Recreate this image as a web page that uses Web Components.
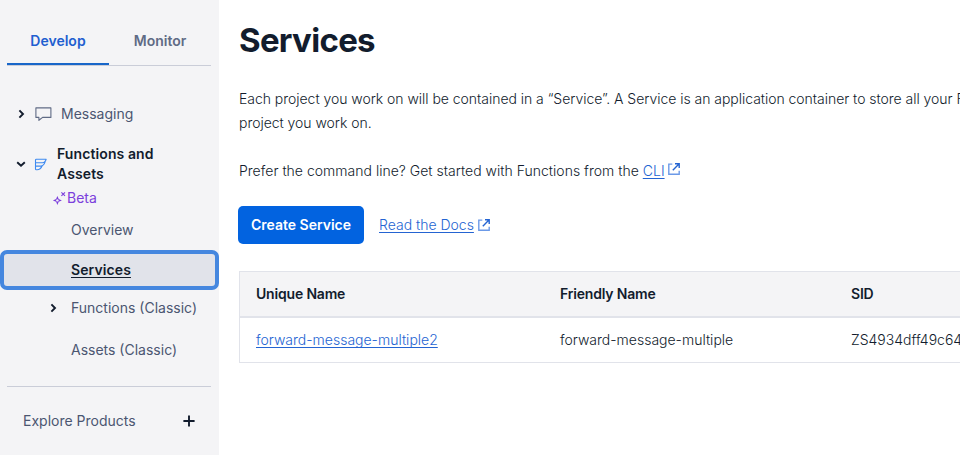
<!DOCTYPE html>
<html lang="en">
<head>
<meta charset="utf-8">
<title>Services</title>
<style>
html,body{margin:0;height:100%;overflow:hidden;background:#fff}
body{font-family:Inter,"Liberation Sans",sans-serif;font-size:14px;line-height:20px;color:#121c2d}
</style>
</head>
<body>
<app-shell>
  <side-nav slot="side">
    <nav-tabs></nav-tabs>
    <nav-item style="--top:28px;--gap:9px"><ui-icon slot="lead" name="right"></ui-icon><ui-icon slot="lead" name="chat"></ui-icon>Messaging</nav-item>
    <nav-item strong style="--top:10px;--gap:10px"><ui-icon slot="lead" name="down"></ui-icon><ui-icon slot="lead" name="functions"></ui-icon><span>Functions and<br>Assets</span></nav-item>
    <beta-tag>Beta</beta-tag>
    <nav-item sub>Overview</nav-item>
    <nav-item sub active>Services</nav-item>
    <nav-item sub style="--h:36px"><ui-icon slot="lead" name="right"></ui-icon>Functions (Classic)</nav-item>
    <nav-item sub style="--h:48px">Assets (Classic)</nav-item>
    <nav-explore>Explore Products</nav-explore>
  </side-nav>
  <service-page slot="main"></service-page>
</app-shell>
<script>
const define = (name, html, setup) => customElements.define(name, class extends HTMLElement {
  constructor() {
    super();
    this.attachShadow({mode: 'open'}).innerHTML = html;
  }
  connectedCallback() { if (setup) setup(this); }
});

const icons = {
  right: [8, 10, '<path d="M2.4 1.4 6 5 2.4 8.6" stroke="#121c2d" stroke-width="1.9"/>'],
  down: [10, 8, '<path d="M1.2 2.2 5 5.8 8.8 2.2" stroke="#121c2d" stroke-width="1.9"/>'],
  chat: [17, 14, '<path d="M.9.9H15.9V10.4H7.6L3.9 13.3V10.4H.9Z" stroke="#606b85" stroke-width="1.1" stroke-linejoin="round"/>'],
  functions: [13, 13, '<path d="M2.4 1.2H12.2Q11.3 4.7 8.4 4.7H1.9Q1.5 4.7 1.5 4.2V2.1Q1.5 1.2 2.4 1.2ZM11.2 3.7Q9.8 8.1 6.7 8.1H1.5V4.7M8.2 7.8Q6.5 11.8 3.1 11.8H2.4Q1.5 11.8 1.5 10.9V8.1" stroke="#3f8af0" stroke-width="1.1" stroke-linejoin="round"/>'],
  sparkle: [14, 14, '<path d="M4.4 4.9 5.7 8.1 8.9 9.4 5.7 10.7 4.4 13.9 3.1 10.7 -.1 9.4 3.1 8.1Z" fill="#7c3fdc"/><circle cx="4.4" cy="9.4" r="1.2" fill="#f4f4f6"/><path d="M8.4 1.3 12 4.9M12 1.3 8.4 4.9" stroke="#7c3fdc" stroke-width="1.1"/>'],
  external: [12, 12, '<path d="M4.3 1.1H.8V11.2H11.2V7.7" stroke="#6c9ae8" stroke-width="1.4"/><path d="M4.8 7.2 10.7 1.3M7 .8H11.2V5" stroke="#2464d2" stroke-width="1.4"/>'],
  plus: [12, 12, '<path d="M6 .4V11.6M.4 6H11.6" stroke="#121c2d" stroke-width="1.9"/>']
};
define('ui-icon', '<style>:host{display:inline-flex;flex:none}svg{display:block;fill:none;overflow:visible}</style><svg></svg>', el => {
  const [w, h, art] = icons[el.getAttribute('name')];
  const svg = el.shadowRoot.querySelector('svg');
  svg.setAttribute('width', w); svg.setAttribute('height', h);
  svg.setAttribute('viewBox', `0 0 ${w} ${h}`); svg.innerHTML = art;
});
define('app-shell', `<style>
:host{display:grid;grid-template-columns:219px minmax(0,1fr);height:455px;overflow:hidden}
</style><slot name="side"></slot><slot name="main"></slot>`);
define('side-nav', `<style>
:host{display:flex;flex-direction:column;background:#f4f4f6;color:#4b5671}
</style><slot></slot>`);
define('nav-tabs', `<style>
:host{display:grid;grid-template-columns:102px 102px;margin:0 8px 0 7px;height:66px;box-sizing:border-box;border-bottom:1px solid #cacdd8}
span{display:flex;align-items:center;justify-content:center;padding-top:19px;font-weight:600;color:#606b85;box-sizing:border-box;height:65px;border-bottom:2px solid transparent}
.on{color:#1f5fd0;border-color:#1866c9}
</style><span class="on">Develop</span><span>Monitor</span>`);
define('nav-item', `<style>
:host{display:flex;align-items:center;flex:none;box-sizing:border-box;height:var(--h,40px);margin-top:var(--top,0);padding-left:17px;white-space:nowrap}
.lead{display:flex;align-items:center;gap:10px;margin-right:var(--gap,0)}
:host([strong]){font-weight:600;color:#121c2d;letter-spacing:.1px}
:host([strong]) .lead{gap:8px;margin-left:-1px}
:host([sub]){padding-left:49px}
:host([sub]) .lead{width:22px;flex:none}
:host([active]){border:4px solid #4587df;border-radius:7px;background:#e1e3ea;color:#121c2d;font-weight:600;letter-spacing:.1px;text-decoration:underline;text-underline-offset:2px;padding-left:45px}
</style><span class="lead"><slot name="lead"></slot></span><slot></slot>`);
define('beta-tag', `<style>
:host{display:flex;align-items:center;flex:none;height:20px;margin:4px 0 2px;padding-left:53px;color:#7c3fdc}
</style><ui-icon name="sparkle"></ui-icon><slot></slot>`);
define('nav-explore', `<style>
:host{display:flex;align-items:center;justify-content:space-between;flex:none;height:68px;margin:12px 8px 0 7px;padding:0 16px;border-top:1px solid #cacdd8}
</style><slot></slot><ui-icon name="plus"></ui-icon>`);
define('text-link', `<style>
:host{color:#2464d2;text-decoration:underline;text-underline-offset:2px;text-decoration-skip-ink:none}
</style><slot></slot>`);
define('service-page', `<style>
:host{display:flex;flex-direction:column;padding:17px 0 0 20px;overflow:hidden;white-space:nowrap;font-weight:300}
h1{margin:0;font-size:33px;line-height:46px;font-weight:700;letter-spacing:-.7px}
p{margin:0;line-height:24px}
.intro{margin-top:24px;letter-spacing:-.035px}.cli{margin-top:24px;letter-spacing:.015px}
.cli ui-icon{margin-left:3px;vertical-align:1px}
.actions{display:flex;align-items:center;margin:23px 0 27px -1px;height:38px}
button{width:126px;height:38px;padding:0;border:0;border-radius:5px;background:#0263e0;color:#fff;font:600 14px/20px Inter,sans-serif}
.actions text-link{margin:0 4px 0 15px}
</style>
<h1>Services</h1>
<p class="intro">Each project you work on will be contained in a “Service”. A Service is an application container to store all your F<br>project you work on.</p>
<p class="cli">Prefer the command line? Get started with Functions from the <text-link>CLI</text-link><ui-icon name="external"></ui-icon></p>
<div class="actions"><button>Create Service</button><text-link>Read the Docs</text-link><ui-icon name="external"></ui-icon></div>
<service-table></service-table>`);
define('service-table', `<style>
:host{display:block;border:1px solid #e1e3ea;border-right:0}
.row{display:grid;grid-template-columns:304px 291px 1fr;padding-left:16px;height:44px;align-items:center}
.head{background:#f4f4f6;font-weight:600;letter-spacing:-.18px;border-bottom:2px solid #e1e3ea}
</style>
<div class="row head"><span>Unique Name</span><span>Friendly Name</span><span>SID</span></div>
<div class="row"><text-link>forward-message-multiple2</text-link><span>forward-message-multiple</span><span>ZS4934dff49c64</span></div>`);
</script>
</body>
</html>
